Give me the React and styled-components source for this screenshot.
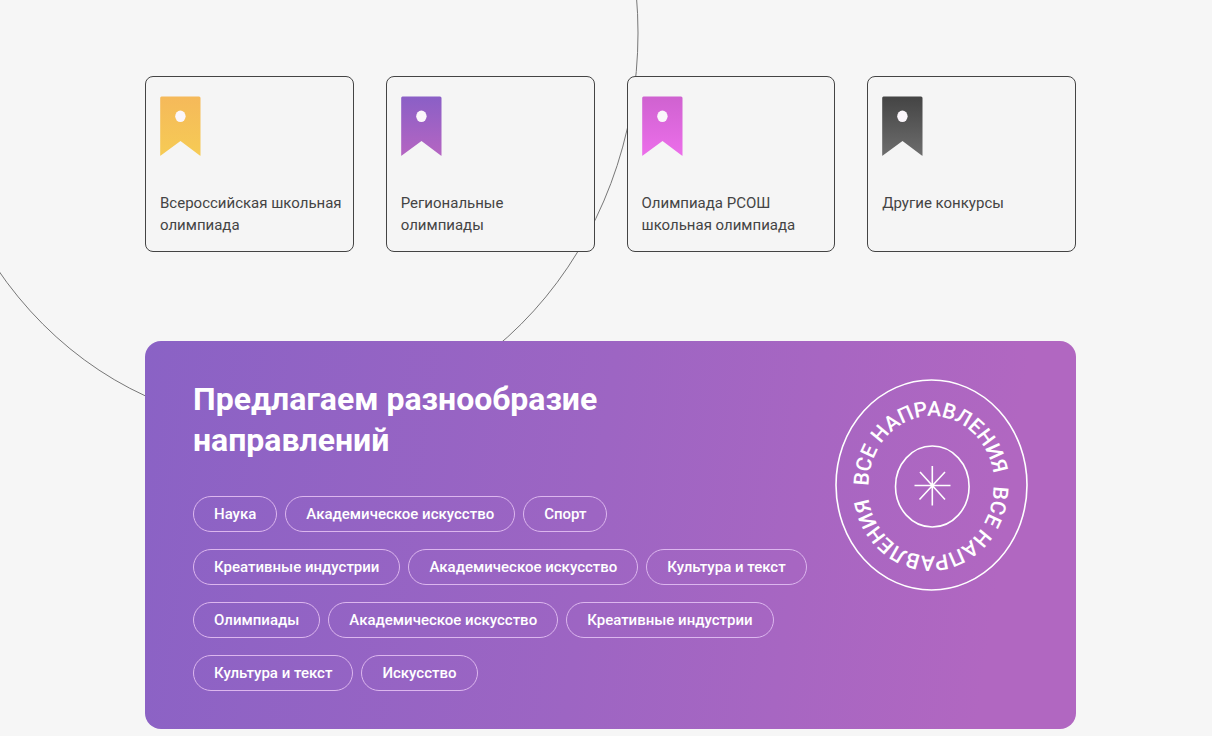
import React from 'react'
import styled, { createGlobalStyle } from 'styled-components'

const contests = [
  { title: 'Всероссийская школьная олимпиада', from: '#f5b95a', to: '#f6cb55' },
  { title: 'Региональные олимпиады', from: '#8a5fc6', to: '#b565c2' },
  { title: 'Олимпиада РСОШ школьная олимпиада', from: '#cf62d0', to: '#ec6eea' },
  { title: 'Другие конкурсы', from: '#444444', to: '#6d6d6d' }
]

const directions = [
  'Наука',
  'Академическое искусство',
  'Спорт',
  'Креативные индустрии',
  'Академическое искусство',
  'Культура и текст',
  'Олимпиады',
  'Академическое искусство',
  'Креативные индустрии',
  'Культура и текст',
  'Искусство'
]

const Bookmark = ({ id, from, to }) => (
  <BookmarkIcon viewBox='0 0 41 60' aria-hidden='true'>
    <defs>
      <linearGradient id={id} x1='0' y1='0' x2='0' y2='1'>
        <stop offset='0' stopColor={from} />
        <stop offset='1' stopColor={to} />
      </linearGradient>
    </defs>
    <path
      d='M1.5 0.4H39Q40.5 0.4 40.5 1.9V59.4Q40.5 60 39.8 59.6L20.5 45L0.8 59.6Q0.2 60 0.2 59.4V1.9Q0.2 0.4 1.5 0.4Z'
      fill={`url(#${id})`}
    />
    <ellipse cx='20.4' cy='20.3' rx='5.2' ry='5.8' fill='#fbf6fb' />
  </BookmarkIcon>
)

const Badge = () => (
  <BadgeLink href='#all' aria-label='Все направления'>
    <BadgeIcon viewBox='0 0 193 212'>
      <defs>
        <path id='arc-top' d='M33.5 107A63 70 0 0 1 159.5 107' />
        <path id='arc-bottom' d='M158.5 107A63 70 0 0 1 32.5 107' />
      </defs>
      <ellipse cx='96.5' cy='106' rx='95.5' ry='105' />
      <ellipse cx='97.3' cy='107.5' rx='36.8' ry='40.5' />
      <path d='M79.5 106.5H115.5M97.3 87V126.5M85 93L110 120.5M110 93L84.5 120.5' />
      <BadgeText>
        <textPath href='#arc-top'>ВСЕ НАПРАВЛЕНИЯ</textPath>
      </BadgeText>
      <BadgeText>
        <textPath href='#arc-bottom'>ВСЕ НАПРАВЛЕНИЯ</textPath>
      </BadgeText>
    </BadgeIcon>
  </BadgeLink>
)

const App = () => (
  <Page>
    <GlobalStyle />
    <Orbit viewBox='0 0 640 430' aria-hidden='true'>
      <ellipse cx='282' cy='33' rx='356' ry='393' />
    </Orbit>
    <Cards>
      {
        contests.map(({ title, from, to }, index) => (
          <Card key={index} href='#contest'>
            <Bookmark id={`bookmark-${index}`} from={from} to={to} />
            <CardTitle>{title}</CardTitle>
          </Card>
        ))
      }
    </Cards>
    <Banner>
      <BannerContent>
        <Heading>Предлагаем разнообразие направлений</Heading>
        <Tags>
          {
            directions.map((name, index) => (
              <li key={index}>
                <Tag href='#direction'>{name}</Tag>
              </li>
            ))
          }
        </Tags>
      </BannerContent>
      <Badge />
    </Banner>
  </Page>
)

export default App

const GlobalStyle = createGlobalStyle`
  * {
    box-sizing: border-box;
  }
  body {
    margin: 0;
    background: #f6f6f6;
    font-family: Roboto, sans-serif;
  }
  a {
    color: inherit;
    text-decoration: none;
  }
`

const Page = styled.main`
  position: relative;
  padding: 76px 136px 7px 145px;
  overflow: hidden;
`

const Orbit = styled.svg`
  position: absolute;
  top: 0;
  left: 0;
  width: 640px;
  height: 430px;
  fill: none;
  stroke: #777;
  stroke-width: 1;
`

const Cards = styled.nav`
  position: relative;
  display: grid;
  grid-template-columns: repeat(4, 1fr);
  gap: 32px;
`

const Card = styled.a`
  display: flex;
  flex-direction: column;
  gap: 36px;
  padding: 19px 8px 15px 14px;
  border: 1px solid #444;
  border-radius: 8px;
  background: #f5f5f5;
`

const BookmarkIcon = styled.svg`
  width: 41px;
  height: 60px;
`

const CardTitle = styled.span`
  color: #444;
  font-size: 15px;
  line-height: 22px;
`

const Banner = styled.section`
  position: relative;
  display: flex;
  align-items: flex-start;
  justify-content: space-between;
  gap: 16px;
  margin-top: 89px;
  padding: 38px 48px;
  border-radius: 16px;
  background: linear-gradient(98deg, #8a62c5 0%, #9d65c3 48%, #b167c1 90%);
  color: #fff;
`

const BannerContent = styled.div`
  flex: 1;
`

const Heading = styled.h2`
  max-width: 480px;
  margin: 0 0 35px;
  font-size: 32px;
  font-weight: 700;
  line-height: 41px;
`

const Tags = styled.ul`
  display: flex;
  flex-wrap: wrap;
  gap: 17px 8px;
  margin: 0;
  padding: 0;
  list-style: none;
`

const Tag = styled.a`
  display: block;
  padding: 0 20px;
  border: 1px solid #dcb6ee;
  border-radius: 18px;
  font-size: 15px;
  font-weight: 500;
  line-height: 34px;
`

const BadgeLink = styled.a`
  flex: none;
`

const BadgeIcon = styled.svg`
  display: block;
  width: 193px;
  height: 212px;
  fill: none;
  stroke: #fff;
  stroke-width: 1.6;
`

const BadgeText = styled.text`
  fill: #fff;
  stroke: none;
  font-size: 21px;
  font-weight: 500;
`
